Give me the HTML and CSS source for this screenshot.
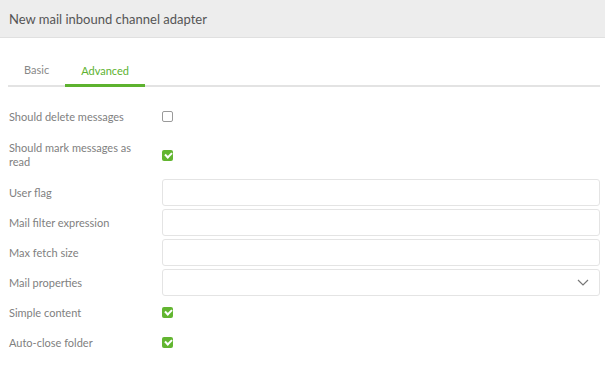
FILE: index.html
```html
<!DOCTYPE html>
<html lang="en">
<head>
  <meta charset="UTF-8" />
  <title>New mail inbound channel adapter</title>
  <link rel="stylesheet" href="styles.css">
</head>
<body>
  <div class="header">New mail inbound channel adapter</div>

  <!-- TABS -->
  <div class="tabs">
    <div class="tab">Basic</div>
    <div class="tab active">Advanced</div>
  </div>

  <div class="form">
    <div class="row">
      <label>Should delete messages</label>
      <span class="check"></span>
    </div>
    <div class="row tall">
      <label>Should mark messages as<br>read</label>
      <span class="check on"></span>
    </div>
    <div class="row">
      <label>User flag</label>
      <div class="field"></div>
    </div>
    <div class="row">
      <label>Mail filter expression</label>
      <div class="field"></div>
    </div>
    <div class="row">
      <label>Max fetch size</label>
      <div class="field"></div>
    </div>
    <div class="row">
      <label>Mail properties</label>
      <div class="field select">
        <svg width="12" height="7" viewBox="0 0 12 7"><path d="M1 1l5 5 5-5" fill="none" stroke="#777" stroke-width="1.2"/></svg>
      </div>
    </div>
    <div class="row">
      <label>Simple content</label>
      <span class="check on"></span>
    </div>
    <div class="row">
      <label>Auto-close folder</label>
      <span class="check on"></span>
    </div>
  </div>
</body>
</html>
```
FILE: styles.css
```css
body {
  margin: 0;
  background: #fff;
  font-family: Lato, sans-serif;
  color: #777;
}

.header {
  height: 37px;
  line-height: 39px;
  background: #ededed;
  border-bottom: 1px solid #e0e0e0;
  padding-left: 9px;
  font-size: 13px;
  color: #555;
}

.tabs {
  display: flex;
  margin: 16px 5px 0 8px;
  border-bottom: 2px solid #e3e3e3;
}

.tab {
  padding: 0 16px;
  height: 31px;
  line-height: 31px;
  font-size: 11px;
  color: #888;
  margin-bottom: -2px;
}

.tab.active {
  color: #5db22f;
  border-bottom: 3px solid #5db22f;
  height: 30px;
  line-height: 33px;
}

.form {
  display: flex;
  flex-direction: column;
  gap: 3px;
  padding: 16px 5px 0 9px;
}

.row {
  display: flex;
  align-items: center;
  min-height: 27px;
}

.row.tall {
  padding: 8px 0 7px;
}

.row label {
  width: 153px;
  font-size: 11px;
  line-height: 14px;
  color: #808080;
}

.check {
  width: 9px;
  height: 9px;
  border: 1px solid #9a9a9a;
  border-radius: 2px;
}

.check.on {
  width: 11px;
  height: 11px;
  border: none;
  background: #62b530;
  position: relative;
}

.check.on::after {
  content: "";
  position: absolute;
  left: 3px;
  top: 2px;
  width: 5px;
  height: 3px;
  border-left: 2px solid #fff;
  border-bottom: 2px solid #fff;
  transform: rotate(-45deg);
}

.field {
  flex: 1;
  height: 25px;
  border: 1px solid #e4e4e4;
  border-radius: 3px;
}

.field.select {
  display: flex;
  align-items: center;
  justify-content: flex-end;
  padding-right: 10px;
}
```
